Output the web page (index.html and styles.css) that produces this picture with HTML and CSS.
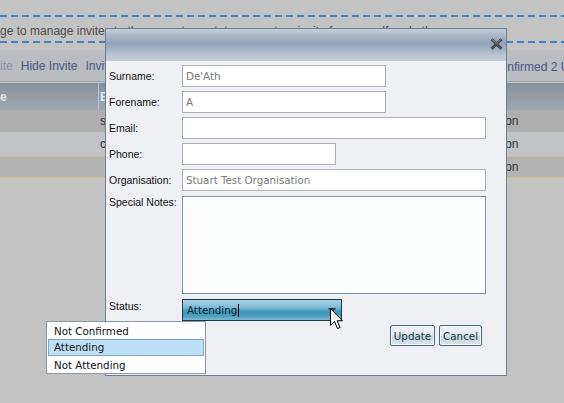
FILE: index.html
```html
<!DOCTYPE html>
<html>
<head>
<meta charset="utf-8">
<title>Manage Invites</title>
<link rel="stylesheet" href="styles.css">
</head>
<body>
<div class="page">
  <div class="notice">
    <p>Use this page to manage invites to the current event, to request an invite for yourself and others</p>
  </div>
  <div class="toolbar">
    <div class="actions">
      <a class="action disabled first">Write</a>
      <a class="action">Hide Invite</a>
      <a class="action">Invite Self</a>
    </div>
    <div class="filters">
      <a class="action">Confirmed 2 Users</a>
    </div>
  </div>
  <div class="grid">
    <div class="cell head c1"><span class="shift">Name</span></div>
    <div class="cell head c2">Email</div>
    <div class="cell head c3">Organisation</div>

    <div class="cell r1 c1"></div>
    <div class="cell r1 c2">stuart.death@example.com</div>
    <div class="cell r1 c3">Stuart Test Organisation</div>

    <div class="cell r2 c1"></div>
    <div class="cell r2 c2">c.smith@example.com</div>
    <div class="cell r2 c3">Stuart Test Organisation</div>

    <div class="cell r3 c1"></div>
    <div class="cell r3 c2"></div>
    <div class="cell r3 c3">Stuart Test Organisation</div>
  </div>
</div>

<div class="dialog">
  <div class="titlebar">
    <svg class="close" width="13" height="12" viewBox="0 0 13 12">
      <path d="M1.5 1.2 L11.5 10.8 M11.5 1.2 L1.5 10.8" stroke="#4a4f55" stroke-width="3" fill="none"/>
      <path d="M2 1 L6.5 5.3 L11 1" stroke="#7d838a" stroke-width="1" fill="none"/>
    </svg>
  </div>
  <div class="body">
    <div class="form">
      <label class="lbl">Surname:</label>
      <div class="field w-md">De'Ath</div>
      <label class="lbl">Forename:</label>
      <div class="field w-md">A</div>
      <label class="lbl">Email:</label>
      <div class="field w-lg"></div>
      <label class="lbl">Phone:</label>
      <div class="field w-sm"></div>
      <label class="lbl">Organisation:</label>
      <div class="field w-lg">Stuart Test Organisation</div>
      <label class="lbl top">Special Notes:</label>
      <div class="field notes w-lg"></div>
      <label class="lbl status-lbl">Status:</label>
      <div class="select">
        <span class="sel-text">Attending</span><span class="caret"></span>
        <span class="arrow"></span>
      </div>
    </div>
    <div class="buttons">
      <button class="btn">Update</button>
      <button class="btn">Cancel</button>
    </div>
  </div>
</div>

<ul class="dropdown">
  <li class="opt">Not Confirmed</li>
  <li class="opt active">Attending</li>
  <li class="opt">Not Attending</li>
</ul>

<svg class="cursor" width="13" height="22" viewBox="0 0 13 22">
  <polygon points="0.5,0.5 0.5,17.5 4.5,13.5 7.5,20.5 10,19.5 7.2,12.8 12.5,12.8" fill="#fff" stroke="#000" stroke-width="1" stroke-linejoin="miter"/>
</svg>
</body>
</html>
```

FILE: styles.css
```css
html, body {
  margin: 0;
  padding: 0;
}
body {
  width: 564px;
  height: 403px;
  overflow: hidden;
  position: relative;
  background: #c3c3c3;
  font-family: "Liberation Sans", Arial, sans-serif;
}

.page {
  padding-top: 15px;
}

.notice {
  height: 24px;
  padding: 2px 0;
  background:
    repeating-linear-gradient(90deg, #3d83c7 0 7px, transparent 7px 11px) left top / 100% 2px no-repeat,
    repeating-linear-gradient(90deg, #3d83c7 0 7px, transparent 7px 11px) left bottom / 100% 2px no-repeat;
}
.notice p {
  margin: 0;
  padding-top: 2px;
  line-height: 24px;
  font-size: 12px;
  color: #4c4c4c;
  white-space: nowrap;
  text-indent: -60px;
}

.toolbar {
  margin-top: 7px;
  height: 31px;
  border-bottom: 1px solid #9ca3ab;
  background: #babcbf;
  display: grid;
  grid-template-columns: 492px max-content;
  align-items: center;
  margin-bottom: 1px;
  white-space: nowrap;
}
.actions {
  display: flex;
  gap: 8px;
  overflow: hidden;
}
.action {
  font-size: 12px;
  color: #4a5587;
}
.action.disabled {
  color: #8b93ae;
}
.action.first {
  margin-left: -15px;
}

.grid {
  display: grid;
  grid-template-columns: 99px 289px 176px;
  grid-template-rows: 27px 22px 24px 22px;
}
.cell {
  font-size: 12px;
  color: #333;
  white-space: nowrap;
  overflow: hidden;
  display: flex;
  align-items: center;
}
.head {
  background: linear-gradient(#87919e, #9fa7b2);
  color: #e4e8ee;
  font-weight: bold;
}
.head.c1 {
  border-right: 1px solid #bac2cc;
}
.shift {
  margin-left: -26px;
}
.c2 {
  padding-left: 1px;
}
.c3 {
  padding-left: 2px;
}
.r1 {
  background: #aeaeae;
}
.r2 {
  background: #c1c3c6;
}
.r3 {
  background: #b3b3b3;
  border-top: 1px solid #cbbd8c;
  border-bottom: 1px solid #cbbd8c;
}

.dialog {
  position: absolute;
  left: 105px;
  top: 28px;
  width: 400px;
  height: 346px;
  border: 1px solid #6f7f93;
  background: #eef0f3;
}
.titlebar {
  height: 32px;
  box-sizing: border-box;
  padding: 9px 3px 0 0;
  display: flex;
  justify-content: flex-end;
  align-items: flex-start;
  background: linear-gradient(180deg, #c6ced9 0%, #aab6c7 22%, #94a4b9 45%, #9badc0 58%, #bcc6d3 82%, #c6cfda 100%);
}
.close {
  display: block;
}

.form {
  display: grid;
  grid-template-columns: 73px max-content;
  row-gap: 4px;
  padding: 4px 0 0 3px;
  align-items: center;
}
.lbl {
  font-size: 10.5px;
  line-height: 12px;
  color: #111;
}
.lbl.top {
  align-self: start;
  margin-top: 1px;
}
.lbl.status-lbl {
  align-self: start;
  margin-top: 2px;
}
.field {
  box-sizing: border-box;
  height: 22px;
  border: 1px solid #abafb3;
  background: #fff;
  padding: 0 3px;
  font-family: "DejaVu Sans", Verdana, sans-serif;
  font-size: 10.3px;
  line-height: 20px;
  color: #7a7a7a;
}
.w-md { width: 204px; }
.w-lg { width: 304px; }
.w-sm { width: 154px; }
.notes {
  height: 98px;
  margin-top: 1px;
  border-color: #7b90a8;
  background: #fcfdfd;
}

.select {
  box-sizing: border-box;
  width: 160px;
  height: 22px;
  margin-top: 1px;
  border: 1px solid #1e3a49;
  background: linear-gradient(180deg, #a8d4e7 0%, #80bdd7 35%, #3f93b7 60%, #4d9dbf 80%, #7dbdd6 100%);
  display: flex;
  align-items: center;
  padding-left: 4px;
  font-family: "DejaVu Sans", Verdana, sans-serif;
  font-size: 10.3px;
  color: #0b2531;
}
.caret {
  width: 1px;
  height: 13px;
  background: #000;
  margin-left: 1px;
}
.arrow {
  margin-left: auto;
  margin-right: 5px;
  width: 0;
  height: 0;
  border-left: 4px solid transparent;
  border-right: 4px solid transparent;
  border-top: 5px solid #1d2d37;
}

.buttons {
  display: flex;
  justify-content: flex-end;
  gap: 4px;
  margin-top: 4px;
  padding-right: 24px;
}
.btn {
  box-sizing: border-box;
  height: 21px;
  padding: 0 3px;
  border: 1px solid #4f6879;
  border-radius: 2px;
  background: linear-gradient(180deg, #f1f5f8 0%, #dfe7ed 45%, #cad7e0 55%, #d7e2e9 100%);
  box-shadow: inset 0 0 0 1px #f3f6f8;
  font-family: "DejaVu Sans", Verdana, sans-serif;
  font-size: 10.3px;
  color: #163846;
}

.dropdown {
  position: absolute;
  left: 46px;
  top: 321px;
  width: 158px;
  margin: 0;
  padding: 0;
  list-style: none;
  border: 1px solid #8b99a5;
  background: #fff;
}
.opt {
  box-sizing: border-box;
  height: 17px;
  line-height: 17px;
  padding: 1px 0 0 7px;
  font-family: "DejaVu Sans", Verdana, sans-serif;
  font-size: 10.3px;
  color: #111;
}
.opt.active {
  margin: 0 1px;
  padding: 0 0 0 5px;
  line-height: 15px;
  border: 1px solid #7ca9c2;
  background: #bde0f4;
}

.cursor {
  position: absolute;
  left: 330px;
  top: 308px;
}
```
